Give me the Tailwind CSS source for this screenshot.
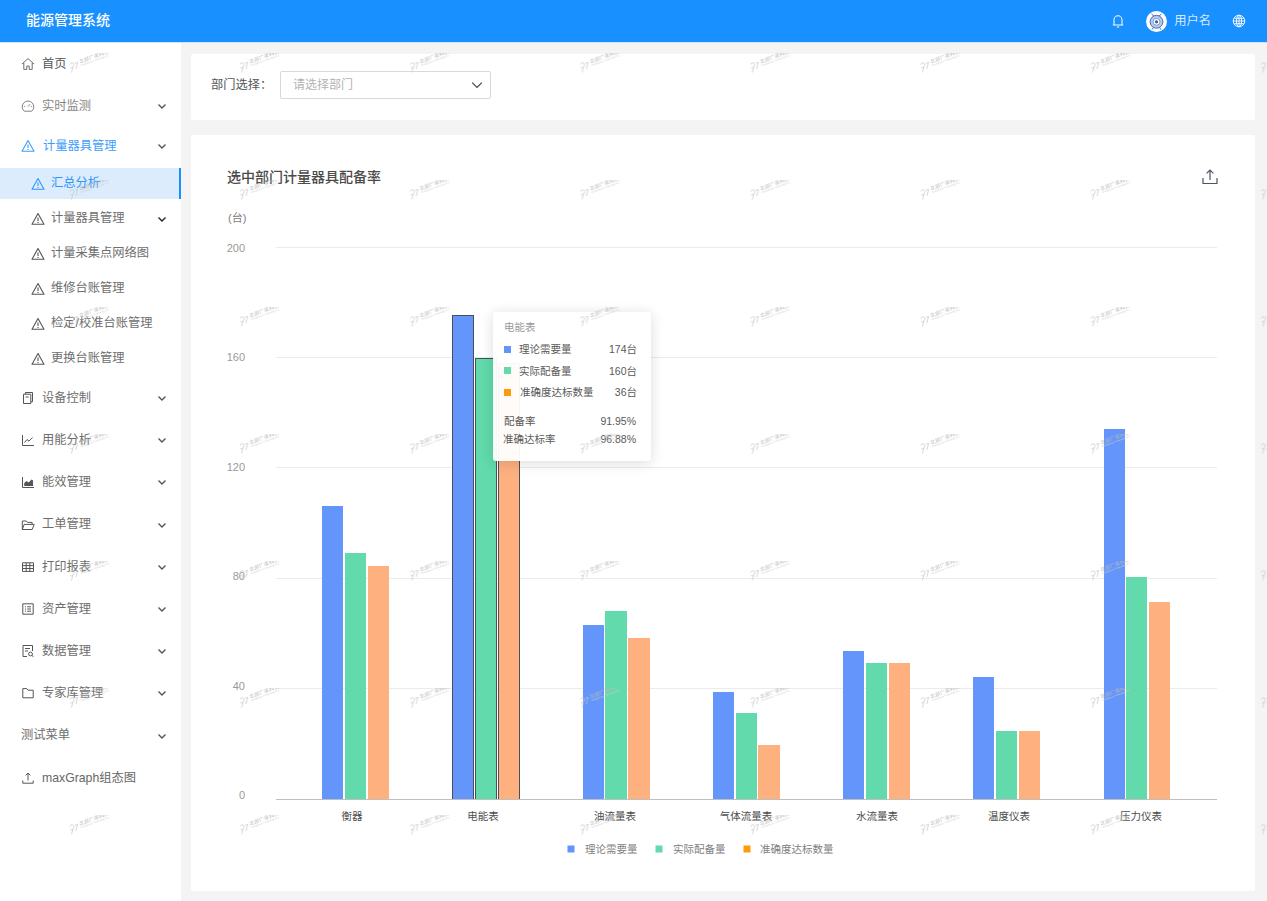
<!DOCTYPE html>
<html lang="zh">
<head>
<meta charset="utf-8">
<title>能源管理系统</title>
<script src="https://cdn.jsdelivr.net/npm/@tailwindcss/browser@4"></script>
</head>
<body class="m-0 overflow-hidden">
<svg width="0" height="0" class="absolute">
  <defs>
    <symbol id="warn" viewBox="0 0 14 14"><path d="M7 1.6 13 12.2H1Z" fill="none" stroke="currentColor" stroke-width="1.1" stroke-linejoin="round"/><path d="M7 5.4V9M7 10v.9" fill="none" stroke="currentColor" stroke-width="1.1"/></symbol>
    <symbol id="chev" viewBox="0 0 10 10"><path d="M1.5 3.5 5 7l3.5-3.5" fill="none" stroke="currentColor" stroke-width="1.4"/></symbol>
  </defs>
</svg>
<div class="relative w-[1267px] h-[901px] bg-[#f4f4f4] font-['Liberation_Sans','Noto_Sans_CJK_SC',sans-serif] text-[12.25px] text-[#6e6e6e] overflow-hidden">
  <header class="h-[43px] bg-[#1890ff] flex items-center pl-[26px] pr-[21px] text-white border-b border-[#cfe4f8]">
    <span class="text-[14px] font-medium pb-[2px]">能源管理系统</span>
    <div class="ml-auto flex items-center">
      <svg class="w-[16px] h-[16px]" viewBox="0 0 14 14" fill="none" stroke="#fff" stroke-width=".9"><path d="M3.5 10.5V6a3.5 3.5 0 0 1 7 0v4.5ZM2.5 10.5h9M6 12.3h2"/></svg>
      <svg class="w-[21px] h-[21px] ml-[20px]" viewBox="0 0 21 21"><circle cx="10.5" cy="10.5" r="10.5" fill="#fff"/><path d="M5.5 3 8.5 5.5M15.5 3 12.5 5.5M7 17l-.8 1.5M14 17l.8 1.5" stroke="#3f6fb5" fill="none"/><circle cx="10.5" cy="10.8" r="6.4" fill="#b9cbe8" stroke="#3f6fb5"/><circle cx="10.5" cy="10.8" r="3.4" fill="#fff" stroke="#3f6fb5" stroke-width=".6"/><circle cx="10.5" cy="10.8" r="1.6" fill="#2f5fa8"/></svg>
      <span class="ml-[7px] text-[12.25px] text-[#d5e9ff]">用户名</span>
      <svg class="w-[14px] h-[14px] ml-[21px]" viewBox="0 0 14 14" fill="none" stroke="#fff" stroke-width=".9"><circle cx="7" cy="7" r="5.8"/><ellipse cx="7" cy="7" rx="2.6" ry="5.8"/><path d="M1.2 7h11.6M2.2 4.3h9.6M2.2 9.7h9.6M7 1.2v11.6"/></svg>
    </div>
  </header>

  <div class="flex h-[858px]">
    <aside class="w-[181px] h-full bg-white shrink-0">
      <div class="flex items-center h-[42px] pl-[21px] pr-[14px] gap-[7px]">
        <svg class="w-[14px] h-[14px] shrink-0" viewBox="0 0 14 14" fill="none" stroke="currentColor"><path d="M1 7 7 1.6 13 7M2.8 5.8v6.6h3V9h2.4v3.4h3V5.8"/></svg><span class="text-[#555]">首页</span>
      </div>
      <div class="flex items-center h-[42px] pl-[21px] pr-[14px] gap-[7px] text-[#858585]">
        <svg class="w-[14px] h-[14px] shrink-0" viewBox="0 0 14 14" fill="none" stroke="currentColor"><path d="M3.2 12.2a5.8 5.8 0 1 1 7.6 0ZM7 7.6 9 5.2M3.2 7.4h1M9.8 7.4h1"/></svg><span>实时监测</span>
        <svg class="w-[10px] h-[10px] ml-auto text-[#555]"><use href="#chev"/></svg>
      </div>
      <div class="flex items-center h-[39px] pb-[1px] pl-[21px] pr-[14px] gap-[8px] text-[#3c9dfa]">
        <svg class="w-[14px] h-[14px] shrink-0"><use href="#warn"/></svg><span>计量器具管理</span>
        <svg class="w-[10px] h-[10px] ml-auto text-[#555]"><use href="#chev"/></svg>
      </div>

      <div class="flex items-center h-[31px] my-[2px] pl-[31px] gap-[6px] bg-[#dcecfd] border-r-2 border-[#1890ff] text-[#2f97fa]">
        <svg class="w-[14px] h-[14px] shrink-0"><use href="#warn"/></svg><span>汇总分析</span>
      </div>
      <div class="flex items-center h-[35px] pl-[31px] pr-[14px] gap-[6px]">
        <svg class="w-[14px] h-[14px] shrink-0 text-[#555]"><use href="#warn"/></svg><span>计量器具管理</span>
        <svg class="w-[10px] h-[10px] ml-auto text-[#222]"><use href="#chev"/></svg>
      </div>
      <div class="flex items-center h-[35px] pl-[31px] gap-[6px]"><svg class="w-[14px] h-[14px] shrink-0 text-[#555]"><use href="#warn"/></svg><span>计量采集点网络图</span></div>
      <div class="flex items-center h-[35px] pl-[31px] gap-[6px]"><svg class="w-[14px] h-[14px] shrink-0 text-[#555]"><use href="#warn"/></svg><span>维修台账管理</span></div>
      <div class="flex items-center h-[35px] pl-[31px] gap-[6px]"><svg class="w-[14px] h-[14px] shrink-0 text-[#555]"><use href="#warn"/></svg><span>检定/校准台账管理</span></div>
      <div class="flex items-center h-[35px] pl-[31px] gap-[6px]"><svg class="w-[14px] h-[14px] shrink-0 text-[#555]"><use href="#warn"/></svg><span>更换台账管理</span></div>

      <div class="flex items-center h-[42.2px] mt-[1px] pl-[21px] pr-[14px] gap-[7px]">
        <svg class="w-[14px] h-[14px] shrink-0 text-[#555]" viewBox="0 0 14 14" fill="none" stroke="currentColor"><path d="M4.5 3.2V1.5H11.5V10.8H9.8M2.5 3.2H9.8V12.5H2.5ZM4.6 6h3"/></svg><span>设备控制</span>
        <svg class="w-[10px] h-[10px] ml-auto text-[#555]"><use href="#chev"/></svg>
      </div>
      <div class="flex items-center h-[42.2px] pl-[21px] pr-[14px] gap-[7px]">
        <svg class="w-[14px] h-[14px] shrink-0 text-[#555]" viewBox="0 0 14 14" fill="none" stroke="currentColor"><path d="M1.5 2v10.5H13M3.5 9.5 6 6.5l2 1.6 3.6-3.6"/></svg><span>用能分析</span>
        <svg class="w-[10px] h-[10px] ml-auto text-[#555]"><use href="#chev"/></svg>
      </div>
      <div class="flex items-center h-[42.2px] pl-[21px] pr-[14px] gap-[7px]">
        <svg class="w-[14px] h-[14px] shrink-0 text-[#555]" viewBox="0 0 14 14" fill="none" stroke="currentColor"><path d="M1.5 2v10.5H13"/><path d="M3.2 11V8l2.4-2 2 1.4 3-2.8 1.4 1V11Z" fill="currentColor" stroke="none"/></svg><span>能效管理</span>
        <svg class="w-[10px] h-[10px] ml-auto text-[#555]"><use href="#chev"/></svg>
      </div>
      <div class="flex items-center h-[42.2px] pl-[21px] pr-[14px] gap-[7px]">
        <svg class="w-[14px] h-[14px] shrink-0 text-[#555]" viewBox="0 0 14 14" fill="none" stroke="currentColor"><path d="M1.3 11.5V3h4l1.2 1.4h4.6v2M1.3 11.5 3.2 6.4h10l-2 5.1Z"/></svg><span>工单管理</span>
        <svg class="w-[10px] h-[10px] ml-auto text-[#555]"><use href="#chev"/></svg>
      </div>
      <div class="flex items-center h-[42.2px] pl-[21px] pr-[14px] gap-[7px]">
        <svg class="w-[14px] h-[14px] shrink-0 text-[#555]" viewBox="0 0 14 14" fill="none" stroke="currentColor"><path d="M1.5 2.8h11v8.6h-11ZM1.5 5.6h11M1.5 8.5h11M5.2 2.8v8.6M8.8 2.8v8.6"/></svg><span>打印报表</span>
        <svg class="w-[10px] h-[10px] ml-auto text-[#555]"><use href="#chev"/></svg>
      </div>
      <div class="flex items-center h-[42.2px] pl-[21px] pr-[14px] gap-[7px]">
        <svg class="w-[14px] h-[14px] shrink-0 text-[#555]" viewBox="0 0 14 14" fill="none" stroke="currentColor"><path d="M1.8 1.8h10.4v10.4H1.8ZM4 4.8h1M6.2 4.8H10M4 7h1M6.2 7H10M4 9.2h1M6.2 9.2H10"/></svg><span>资产管理</span>
        <svg class="w-[10px] h-[10px] ml-auto text-[#555]"><use href="#chev"/></svg>
      </div>
      <div class="flex items-center h-[42.2px] pl-[21px] pr-[14px] gap-[7px]">
        <svg class="w-[14px] h-[14px] shrink-0 text-[#555]" viewBox="0 0 14 14" fill="none" stroke="currentColor"><path d="M6 12.5H2V1.5h9.5v5.5M4 4.5h5M4 7h3"/><circle cx="9.5" cy="10" r="1.9"/><path d="m11 11.5 1.5 1.3"/></svg><span>数据管理</span>
        <svg class="w-[10px] h-[10px] ml-auto text-[#555]"><use href="#chev"/></svg>
      </div>
      <div class="flex items-center h-[42.2px] pl-[21px] pr-[14px] gap-[7px]">
        <svg class="w-[14px] h-[14px] shrink-0 text-[#555]" viewBox="0 0 14 14" fill="none" stroke="currentColor"><path d="M1.8 2.6h4l1.3 1.6h5.1v7.6H1.8Z"/></svg><span>专家库管理</span>
        <svg class="w-[10px] h-[10px] ml-auto text-[#555]"><use href="#chev"/></svg>
      </div>
      <div class="flex items-center h-[42.2px] pl-[21px] pr-[14px] gap-[7px]">
        <span>测试菜单</span>
        <svg class="w-[10px] h-[10px] ml-auto text-[#555]"><use href="#chev"/></svg>
      </div>
      <div class="flex items-center h-[42.2px] pl-[21px] pr-[14px] gap-[7px]">
        <svg class="w-[14px] h-[14px] shrink-0 text-[#555]" viewBox="0 0 14 14" fill="none" stroke="currentColor"><path d="M1.8 9.5v2.7h10.4V9.5M7 9.5V2.2M4.6 4.4 7 2l2.4 2.4"/></svg><span class="text-[#666]">maxGraph组态图</span>
      </div>
    </aside>

    <main class="flex-1 pt-[11px] pl-[10px] pr-[12px] flex flex-col gap-[15px]">
      <section class="h-[66px] bg-white rounded-[2px] flex items-center pl-[20px] pb-[4px]">
        <span class="text-[#555] w-[69px] mt-[1px]">部门选择：</span>
        <div class="w-[211px] h-[28px] border border-[#d9d9d9] rounded-[2px] flex items-center pl-[12px] pr-[7px] text-[12px] text-[#b3b3b3]">
          <span>请选择部门</span>
          <svg class="w-[12px] h-[12px] ml-auto text-[#444]" viewBox="0 0 10 10"><path d="M1 3 5 7l4-4" fill="none" stroke="currentColor" stroke-width="1"/></svg>
        </div>
      </section>

      <section class="relative h-[756px] bg-white rounded-[2px]">
        <div class="h-[70px] flex items-start justify-between pl-[36px] pr-[36px] pt-[33px]">
          <h2 class="text-[14px] leading-[18px] font-medium text-[#4a4a4a]">选中部门计量器具配备率</h2>
          <svg class="w-[18px] h-[18px]" viewBox="0 0 18 18" fill="none" stroke="#4a5568" stroke-width="1.2"><path d="M2 10v5.5h14V10M9 12V2.2M5.6 5.4 9 2l3.4 3.4"/></svg>
        </div>
        <svg class="block w-[1064px] h-[686px]" viewBox="191 205 1064 686" font-family="'Liberation Sans','Noto Sans CJK SC',sans-serif">
          <text x="228" y="222" font-size="11" fill="#808080">(台)</text>
          <g stroke="#ebebeb" stroke-width="1">
            <path d="M276 247.5H1217M276 357.5H1217M276 467.5H1217M276 578.5H1217M276 688.5H1217"/>
          </g>
          <g font-size="11" fill="#999" text-anchor="end">
            <text x="245" y="252">200</text><text x="245" y="361">160</text><text x="245" y="471">120</text><text x="245" y="580">80</text><text x="245" y="690">40</text><text x="245" y="799">0</text>
          </g>
          <g fill="#6395fa">
            <rect x="322" y="506" width="21" height="294"/><rect x="583" y="625" width="21" height="175"/><rect x="713" y="692" width="21" height="108"/><rect x="843" y="651" width="21" height="149"/><rect x="973" y="677" width="21" height="123"/><rect x="1104" y="429" width="21" height="371"/>
            <rect x="452.5" y="315.5" width="21" height="484" stroke="#4a4f5a"/>
          </g>
          <g fill="#62daab">
            <rect x="345" y="553" width="21" height="247"/><rect x="605" y="611" width="22" height="189"/><rect x="736" y="713" width="21" height="87"/><rect x="866" y="663" width="21" height="137"/><rect x="996" y="731" width="21" height="69"/><rect x="1126" y="577" width="21" height="223"/>
            <rect x="475.5" y="358.5" width="21" height="441" stroke="#4a4f5a"/>
          </g>
          <g fill="#feb07f">
            <rect x="368" y="566" width="21" height="234"/><rect x="628" y="638" width="22" height="162"/><rect x="758" y="745" width="22" height="55"/><rect x="889" y="663" width="21" height="137"/><rect x="1019" y="731" width="21" height="69"/><rect x="1149" y="602" width="21" height="198"/>
            <rect x="498.5" y="363.5" width="21" height="436" stroke="#4a4f5a"/>
          </g>
          <path d="M276 799.5H1217" stroke="#bfbfbf"/>
          <g font-size="10.5" fill="#4d4d4d" text-anchor="middle">
            <text x="352" y="820">衡器</text><text x="483" y="820">电能表</text><text x="615" y="820">油流量表</text><text x="746" y="820">气体流量表</text><text x="877" y="820">水流量表</text><text x="1009" y="820">温度仪表</text><text x="1141" y="820">压力仪表</text>
          </g>
          <g font-size="10.5" fill="#808080">
            <rect x="567.5" y="845.5" width="7" height="7" fill="#6395fa"/><text x="585" y="853">理论需要量</text>
            <rect x="655.5" y="845.5" width="7" height="7" fill="#62daab"/><text x="673" y="853">实际配备量</text>
            <rect x="743.5" y="845.5" width="7" height="7" fill="#ff9a0a"/><text x="760" y="853">准确度达标数量</text>
          </g>
        </svg>
        <div class="absolute left-[302px] top-[177px] w-[158px] h-[149px] rounded-[3px] bg-white/95 shadow-[0_2px_14px_rgba(0,0,0,0.14)] pt-[8px] pl-[11px] pr-[14px] text-[10.5px] leading-[14px] text-[#595959]">
          <div class="text-[#999] mb-[4px]">电能表</div>
          <div class="flex items-center h-[22px]"><i class="w-[7px] h-[7px] bg-[#6395fa] mr-[8px]"></i><span>理论需要量</span><span class="ml-auto">174台</span></div>
          <div class="flex items-center h-[21px]"><i class="w-[7px] h-[7px] bg-[#62daab] mr-[8px]"></i><span>实际配备量</span><span class="ml-auto">160台</span></div>
          <div class="flex items-center h-[22px]"><i class="w-[7px] h-[7px] bg-[#ff9a0a] mr-[9px]"></i><span>准确度达标数量</span><span class="ml-auto">36台</span></div>
          <div class="flex items-center h-[18px] mt-[9px] pr-[1px]"><span>配备率</span><span class="ml-auto">91.95%</span></div>
          <div class="flex items-center h-[18px] pr-[1px] -ml-[1px]"><span>准确达标率</span><span class="ml-auto">96.88%</span></div>
        </div>
      </section>
    </main>
  </div>

  <svg class="absolute inset-0 w-[1267px] h-[901px] pointer-events-none" viewBox="0 0 1267 901" font-family="'Noto Sans CJK SC','Liberation Sans',sans-serif">
    <defs>
      <pattern id="wm" patternUnits="userSpaceOnUse" x="69" y="53" width="170.2" height="127">
        <g fill="none" stroke="#c4c4c4" stroke-width=".7">
          <path d="M1 11.5a2 2 0 1 1 3 2L2.5 19.5M1.2 14.5c1 .8 2 .6 2.8-1"/>
          <path d="M5.8 10.2 8.6 9.4 6.8 16"/>
        </g>
        <g transform="translate(11 10.5) rotate(-20)">
          <text font-size="5" fill="#b8b8b8" letter-spacing=".2">北部广夜科技</text>
          <text y="3" font-size="2.4" fill="#cccccc">Changchun Technology Co.</text>
        </g>
      </pattern>
    </defs>
    <rect width="1267" height="901" fill="url(#wm)"/>
  </svg>
</div>
</body>
</html>
